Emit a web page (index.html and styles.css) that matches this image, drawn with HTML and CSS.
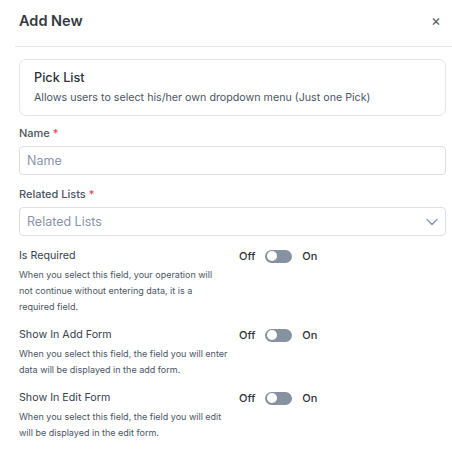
FILE: index.html
```html
<!DOCTYPE html>
<html>
<head>
<meta charset="utf-8">
<link rel="stylesheet" href="styles.css">
</head>
<body>
<div class="modal">
  <div class="header">
    <h1 class="title">Add New</h1>
    <span class="close">×</span>
  </div>
  <div class="body">
    <div class="card">
      <div class="card-title">Pick List</div>
      <div class="card-desc">Allows users to select his/her own dropdown menu (Just one Pick)</div>
    </div>
    <div class="field">
      <label class="label">Name <span class="req">*</span></label>
      <div class="input">Name</div>
    </div>
    <div class="field">
      <label class="label">Related Lists <span class="req">*</span></label>
      <div class="input select">Related Lists
        <svg class="chev" width="12" height="8" viewBox="0 0 12 8"><path d="M1 1.5 L6 6.5 L11 1.5" fill="none" stroke="#8a94a6" stroke-width="1.4" stroke-linecap="round" stroke-linejoin="round"/></svg>
      </div>
    </div>
    <div class="opt">
      <div class="opt-text">
        <div class="opt-title">Is Required</div>
        <div class="opt-desc">When you select this field, your operation will not continue without entering data, it is a required field.</div>
      </div>
      <div class="switch"><span>Off</span><span class="toggle"><span class="thumb"></span></span><span>On</span></div>
    </div>
    <div class="opt">
      <div class="opt-text">
        <div class="opt-title">Show In Add Form</div>
        <div class="opt-desc">When you select this field, the field you will enter data will be displayed in the add form.</div>
      </div>
      <div class="switch"><span>Off</span><span class="toggle"><span class="thumb"></span></span><span>On</span></div>
    </div>
    <div class="opt">
      <div class="opt-text">
        <div class="opt-title">Show In Edit Form</div>
        <div class="opt-desc">When you select this field, the field you will edit will be displayed in the edit form.</div>
      </div>
      <div class="switch"><span>Off</span><span class="toggle"><span class="thumb"></span></span><span>On</span></div>
    </div>
  </div>
</div>
</body>
</html>
```

FILE: styles.css
```css
* { box-sizing: border-box; }
html, body { margin: 0; padding: 0; background: #fff; }
body { font-family: Inter, "Noto Sans", sans-serif; color: #374151; }
.modal { width: 452px; padding-left: 15px; }
.header {
  display: flex; align-items: center; justify-content: space-between;
  height: 47px; border-bottom: 1px solid #e3e5e8;
  padding-left: 4px; padding-right: 11px; padding-bottom: 6px;
}
.title { margin: 0; font-size: 14.5px; font-weight: 600; color: #343a40; }
.close { font-size: 15px; color: #555d68; line-height: 1; }
.body { padding: 12px 6px 0 4px; }
.card {
  border: 1px solid #e3e5e8; border-radius: 7px;
  padding: 9px 14px 10px 14px; height: 57px;
}
.card-title { font-size: 12.7px; font-weight: 500; color: #2d3339; line-height: 18px; }
.card-desc { font-size: 10.7px; color: #4b5563; line-height: 16px; margin-top: 3px; }
.field { margin-top: 9px; }
.label { display: block; font-size: 11px; font-weight: 500; color: #4b5563; line-height: 16px; }
.req { color: #ef4444; }
.input {
  margin-top: 5px; height: 29px; border: 1px solid #dcdfe3; border-radius: 4px;
  padding: 0 7px; font-size: 12.5px; color: #8a94a6;
  display: flex; align-items: center;
}
.select { justify-content: space-between; padding-right: 7px; }
.field + .field { margin-top: 11px; }
.opt {
  display: grid; grid-template-columns: 220px auto; margin-top: 12px;
}
.opt:first-of-type { margin-top: 0; }
.opt-title { font-size: 10.7px; color: #374151; line-height: 16px; }
.opt-desc { font-size: 9px; color: #4b5563; line-height: 16px; margin-top: 3px; max-width: 208.6px; }
.switch { display: flex; align-items: center; gap: 10px; font-size: 11px; font-weight: 500; color: #2d3339; height: 16px; }
.toggle {
  width: 27px; height: 13px; border-radius: 7px; background: #8792a0;
  position: relative; display: inline-block;
}
.thumb {
  position: absolute; left: 1.5px; top: 1.5px; width: 10px; height: 10px;
  border-radius: 50%; background: #fff;
}
```
